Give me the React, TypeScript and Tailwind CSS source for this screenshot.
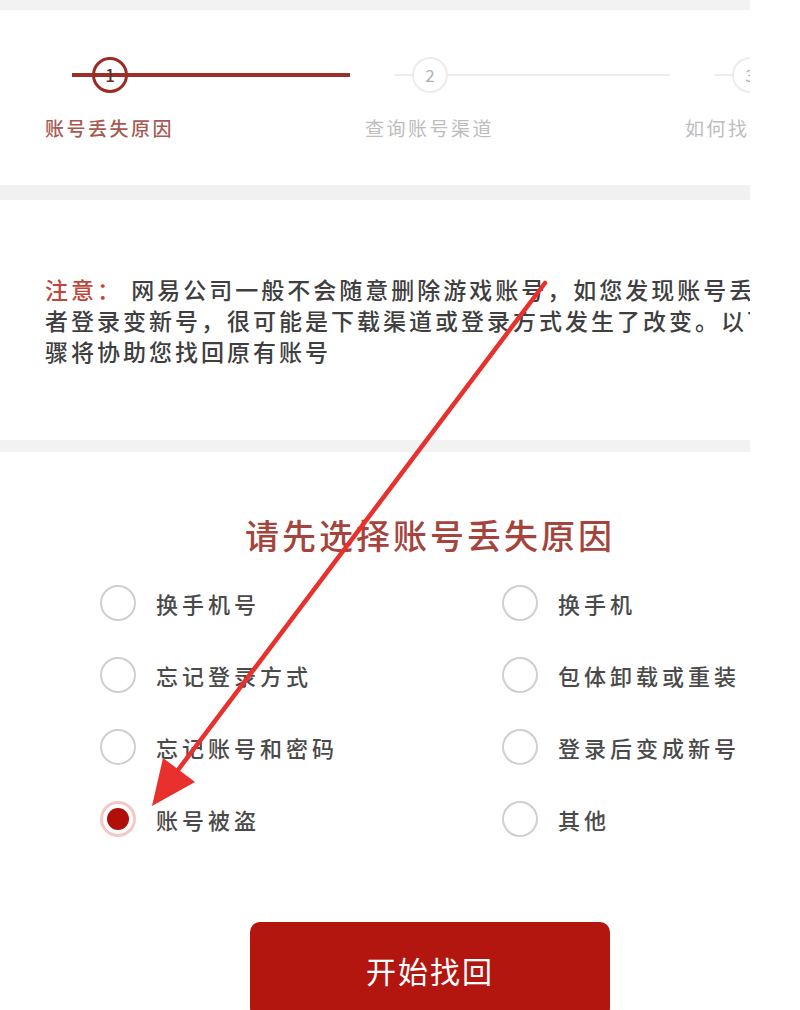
import React from "react";

const font = { fontFamily: '"Noto Sans CJK SC", "Noto Sans", sans-serif' };

const steps = [
  { n: 1, label: "账号丢失原因", active: true },
  { n: 2, label: "查询账号渠道", active: false },
  { n: 3, label: "如何找回账号", active: false },
];

const reasons = [
  "换手机号",
  "换手机",
  "忘记登录方式",
  "包体卸载或重装",
  "忘记账号和密码",
  "登录后变成新号",
  "账号被盗",
  "其他",
];

function Step({ n, label, active }: { n: number; label: string; active: boolean }) {
  return (
    <div className="w-[320px] shrink-0 flex flex-col">
      <div className="relative h-[40px]">
        <div
          className={
            active
              ? "absolute left-[27px] top-[18px] w-[278px] h-[4px] bg-[#9c2f29]"
              : "absolute left-[30px] top-[19px] w-[275px] h-[2px] bg-[#ececec]"
          }
        />
        <div
          className={
            active
              ? "absolute left-[47px] top-[2px] w-[36px] h-[36px] rounded-full border-[3px] border-[#9e2a24] flex items-center justify-center text-[17px] font-medium text-[#5e302b]"
              : "absolute left-[47px] top-[2px] w-[36px] h-[36px] rounded-full border-2 border-[#ececec] bg-white flex items-center justify-center text-[17px] text-[#b0b0b0]"
          }
        >
          {n}
        </div>
      </div>
      <div
        className={
          active
            ? "mt-[21px] text-[19px] leading-[24px] tracking-[2.5px] font-medium text-[#a85a52]"
            : "mt-[21px] text-[19px] leading-[24px] tracking-[2.5px] text-[#bdbdbd]"
        }
      >
        {label}
      </div>
    </div>
  );
}

function Radio({ label, checked }: { label: string; checked: boolean }) {
  return (
    <div className="h-[72px] flex items-center gap-[20px]">
      {checked ? (
        <div className="w-[36px] h-[36px] rounded-full border-[3px] border-[#f2c9c4] flex items-center justify-center">
          <div className="w-[22px] h-[22px] rounded-full bg-[#b00f0a]" />
        </div>
      ) : (
        <div className="w-[36px] h-[36px] rounded-full border-2 border-[#cfcfcf]" />
      )}
      <span className="text-[22px] tracking-[4px] font-medium text-[#4a4a4a]">{label}</span>
    </div>
  );
}

export default function App() {
  return (
    <div className="relative w-[800px] h-[1010px] bg-white overflow-hidden" style={font}>
      <div className="w-[750px] h-full overflow-hidden">
        <div className="w-[860px]">
          <div className="h-[10px] bg-[#f2f2f2]" />

          <section className="h-[175px] pt-[45px] pl-[45px] flex">
            {steps.map((s) => (
              <Step key={s.n} {...s} />
            ))}
          </section>

          <div className="h-[15px] bg-[#f1f1f1]" />

          <section className="h-[240px] pt-[74px] pl-[45px]">
            <p className="w-[775px] text-[23px] leading-[31px] tracking-[3px] font-medium text-[#3f3f3f]">
              <span className="text-[#c0463d]">注意：</span> 网易公司一般不会随意删除游戏账号，如您发现账号丢失或者登录变新号，很可能是下载渠道或登录方式发生了改变。以下步骤将协助您找回原有账号
            </p>
          </section>

          <div className="h-[12px] bg-[#f2f2f2]" />

          <section className="pt-[64px]">
            <h2 className="text-center text-[34px] leading-[38px] tracking-[3px] font-medium text-[#a5443c]">
              请先选择账号丢失原因
            </h2>
            <div className="mt-[13px] pl-[100px] grid grid-cols-[402px_1fr]">
              {reasons.map((r) => (
                <Radio key={r} label={r} checked={r === "账号被盗"} />
              ))}
            </div>
            <div className="mt-[67px] flex justify-center">
              <button className="w-[360px] h-[96px] rounded-[10px] bg-[#b3160e] text-white text-[30px] tracking-[2px]">
                开始找回
              </button>
            </div>
          </section>
        </div>
      </div>

      <svg className="absolute left-0 top-0 pointer-events-none" width="800" height="1010">
        <line x1="545" y1="283" x2="175" y2="774" stroke="#e8302c" strokeWidth="4.5" strokeLinecap="round" />
        <polygon points="152,806 163,758 195,782" fill="#e8302c" />
      </svg>
    </div>
  );
}
